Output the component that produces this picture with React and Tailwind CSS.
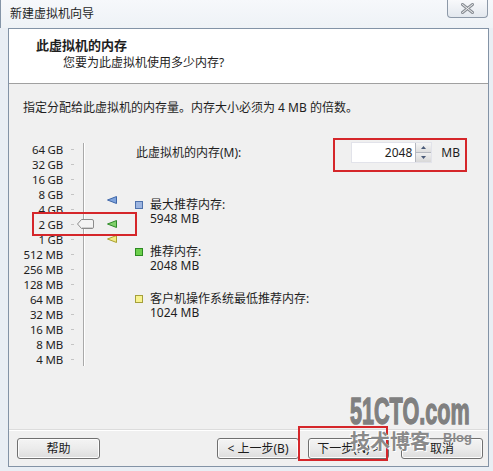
import React from 'react'

const FONT = { fontFamily: '"Noto Sans", "Noto Sans CJK SC", sans-serif' }

const scale = ['64 GB', '32 GB', '16 GB', '8 GB', '4 GB', '2 GB', '1 GB', '512 MB', '256 MB', '128 MB', '64 MB', '32 MB', '16 MB', '8 MB', '4 MB']

function Marker({ fill, stroke }) {
  return (
    <svg width="10" height="8" viewBox="0 0 10 8">
      <polygon points="9.5,0.5 9.5,7.5 0.5,4" fill={fill} stroke={stroke} strokeWidth="1" />
    </svg>
  )
}

function Legend({ color, label, value }) {
  return (
    <div className="flex flex-col">
      <div className="flex items-center h-[14px]">
        <span className={`w-[8px] h-[8px] border ${color}`}></span>
        <span className="ml-[7px]">{label}</span>
      </div>
      <div className="h-[14px] leading-[14px] pl-[15px]">{value}</div>
    </div>
  )
}

function Button({ children, className = '' }) {
  return (
    <div className={`h-[21px] rounded-[3px] border border-[#707070] bg-gradient-to-b from-[#f4f4f4] via-[#ebebeb] to-[#dcdcdc] shadow-[inset_0_0_0_1px_#fcfcfc] flex items-center justify-center text-[12px] text-[#1b1b1b] ${className}`}>
      {children}
    </div>
  )
}

export default function App() {
  return (
    <div className="w-[493px] h-[471px] relative overflow-hidden bg-[#e9eef4] flex flex-col text-[12px] text-[#1e1e1e]" style={FONT}>
      {/* title bar */}
      <div className="h-[28px] flex items-start bg-gradient-to-b from-[#f6f8fb] to-[#eef2f6] border-l border-[#8595a8]">
        <span className="ml-[9px] mt-[6px] leading-[16px]">新建虚拟机向导</span>
        <div className="ml-auto mr-[5px] w-[41px] h-[18px] border border-t-0 border-[#8d99a8] rounded-b-[4px] bg-gradient-to-b from-[#f8f9fb] to-[#e3e8ee] flex items-center justify-center">
          <svg width="13" height="11" viewBox="0 0 13 11">
            <path d="M1.5 1.5 L11.5 9.5 M11.5 1.5 L1.5 9.5" stroke="#8a8f96" strokeWidth="3" strokeLinecap="round" />
            <path d="M1.5 1.5 L11.5 9.5 M11.5 1.5 L1.5 9.5" stroke="#f2f2f2" strokeWidth="1" strokeLinecap="round" />
          </svg>
        </div>
      </div>

      {/* client area */}
      <div className="ml-[8px] mr-[4px] h-[439px] flex flex-col border border-[#8393a6] bg-[#f0f0f0]">
        {/* header */}
        <div className="h-[55px] bg-white border-b border-[#a0a0a0] flex flex-col">
          <div className="ml-[27px] mt-[7px] text-[13px] font-bold leading-[18px]">此虚拟机的内存</div>
          <div className="ml-[54px] leading-[18px]">您要为此虚拟机使用多少内存?</div>
        </div>

        {/* body */}
        <div className="flex-1 flex flex-col pl-[14px]">
          <div className="mt-[16px] leading-[16px]">指定分配给此虚拟机的内存量。内存大小必须为 4 MB 的倍数。</div>

          <div className="mt-[26px] flex">
            {/* scale labels */}
            <div className="w-[40px] flex flex-col">
              {scale.map((s) => (
                <div key={s} className="h-[15px] leading-[15px] text-right text-[11.5px] tracking-[-0.2px]">{s}</div>
              ))}
            </div>
            {/* ticks */}
            <div className="ml-[8px] w-[3px] flex flex-col">
              {scale.map((s) => (
                <div key={s} className="h-[15px] flex items-center">
                  <span className="w-[3px] h-px bg-[#c4c4c4]"></span>
                </div>
              ))}
            </div>
            {/* track */}
            <div className="ml-[9px] relative w-[2px] my-[1px] border-l border-[#a9a9a9] bg-white">
              <svg className="absolute left-[-7px] top-[76px]" width="17" height="10" viewBox="0 0 17 10">
                <path d="M0.5 5 L4.5 0.5 H15 Q16.5 0.5 16.5 2 V8 Q16.5 9.5 15 9.5 H4.5 Z" fill="#f4f4f4" stroke="#8c8c8c" />
                <path d="M5 8.5 H15.5" stroke="#cfcfcf" />
              </svg>
            </div>
            {/* markers */}
            <div className="ml-[22px] w-[10px] flex flex-col">
              <div className="mt-[54px] h-[8px]"><Marker fill="#7ea3dc" stroke="#3e66a8" /></div>
              <div className="mt-[16px] h-[8px]"><Marker fill="#7fd06a" stroke="#2e8a28" /></div>
              <div className="mt-[7px] h-[8px]"><Marker fill="#f3ea84" stroke="#a8a030" /></div>
            </div>
            {/* right content */}
            <div className="ml-[18px] w-[325px] flex flex-col">
              <div className="h-[21px] flex items-center">
                <span className="ml-[1px]">此虚拟机的内存(M):</span>
                <div className="ml-auto w-[81px] h-[21px] flex bg-white border border-[#e2e3ea]">
                  <div className="flex-1 flex items-center justify-end pr-[3px]">2048</div>
                  <div className="w-[16px] flex flex-col border-l border-[#b5b8c0]">
                    <div className="flex-1 bg-gradient-to-b from-[#f6f6f6] to-[#dedede] border-b border-[#b5b8c0] flex items-center justify-center">
                      <svg width="5" height="3" viewBox="0 0 5 3"><polygon points="0,3 5,3 2.5,0" fill="#4a5a78" /></svg>
                    </div>
                    <div className="flex-1 bg-gradient-to-b from-[#f0f0f0] to-[#d8d8d8] flex items-center justify-center">
                      <svg width="5" height="3" viewBox="0 0 5 3"><polygon points="0,0 5,0 2.5,3" fill="#4a5a78" /></svg>
                    </div>
                  </div>
                </div>
                <span className="ml-[9px]">MB</span>
              </div>
              <div className="mt-[35px] flex flex-col gap-[19px]">
                <Legend color="bg-[#9db5e0] border-[#4f72ad]" label="最大推荐内存:" value="5948 MB" />
                <Legend color="bg-[#6ccf4c] border-[#2d8a22]" label="推荐内存:" value="2048 MB" />
                <Legend color="bg-[#f8f390] border-[#a49f3c]" label="客户机操作系统最低推荐内存:" value="1024 MB" />
              </div>
            </div>
          </div>
        </div>

        {/* footer */}
        <div className="h-[37px] border-t border-[#dcdcdc] shadow-[inset_0_1px_0_#ffffff] flex items-start pt-[8px] pl-[8px] pr-[5px]">
          <Button className="w-[83px]">帮助</Button>
          <Button className="ml-auto w-[82px]">&lt; 上一步(B)</Button>
          <Button className="ml-[9px] w-[81px]">下一步(N) &gt;</Button>
          <Button className="ml-[12px] w-[82px]">取消</Button>
        </div>
      </div>

      {/* annotations */}
      <div className="absolute left-[32px] top-[212px] w-[105px] h-[24px] border-2 border-[#d5262a] pointer-events-none"></div>
      <div className="absolute left-[333px] top-[138px] w-[134px] h-[34px] border-2 border-[#d5262a] pointer-events-none"></div>
      <div className="absolute left-[298px] top-[426px] w-[90px] h-[35px] border-2 border-[#d5262a] pointer-events-none"></div>

      {/* watermark */}
      <div className="absolute left-[350px] top-[394px] pointer-events-none">
        <div className="origin-left scale-x-[0.6] text-[36px] font-bold leading-[36px] text-[#808080] [-webkit-text-stroke:1.5px_#808080] [text-shadow:1px_1px_0_#fff,-1px_-1px_0_#fff,1px_-1px_0_#fff,-1px_1px_0_#fff]" style={{ fontFamily: '"Liberation Sans", sans-serif' }}>51CTO.com</div>
        <div className="flex items-start">
          <span className="text-[20px] leading-[22px] font-bold text-[#8a8a8a] [text-shadow:1px_1px_0_#fff,-1px_-1px_0_#fff]" style={{ fontFamily: '"Noto Sans CJK SC", sans-serif' }}>技术博客</span>
          <span className="text-[13px] leading-[13px] font-bold text-[#8a8a8a] mt-[1px]" style={{ fontFamily: '"Liberation Sans", sans-serif' }}>—Blog</span>
        </div>
      </div>
    </div>
  )
}
